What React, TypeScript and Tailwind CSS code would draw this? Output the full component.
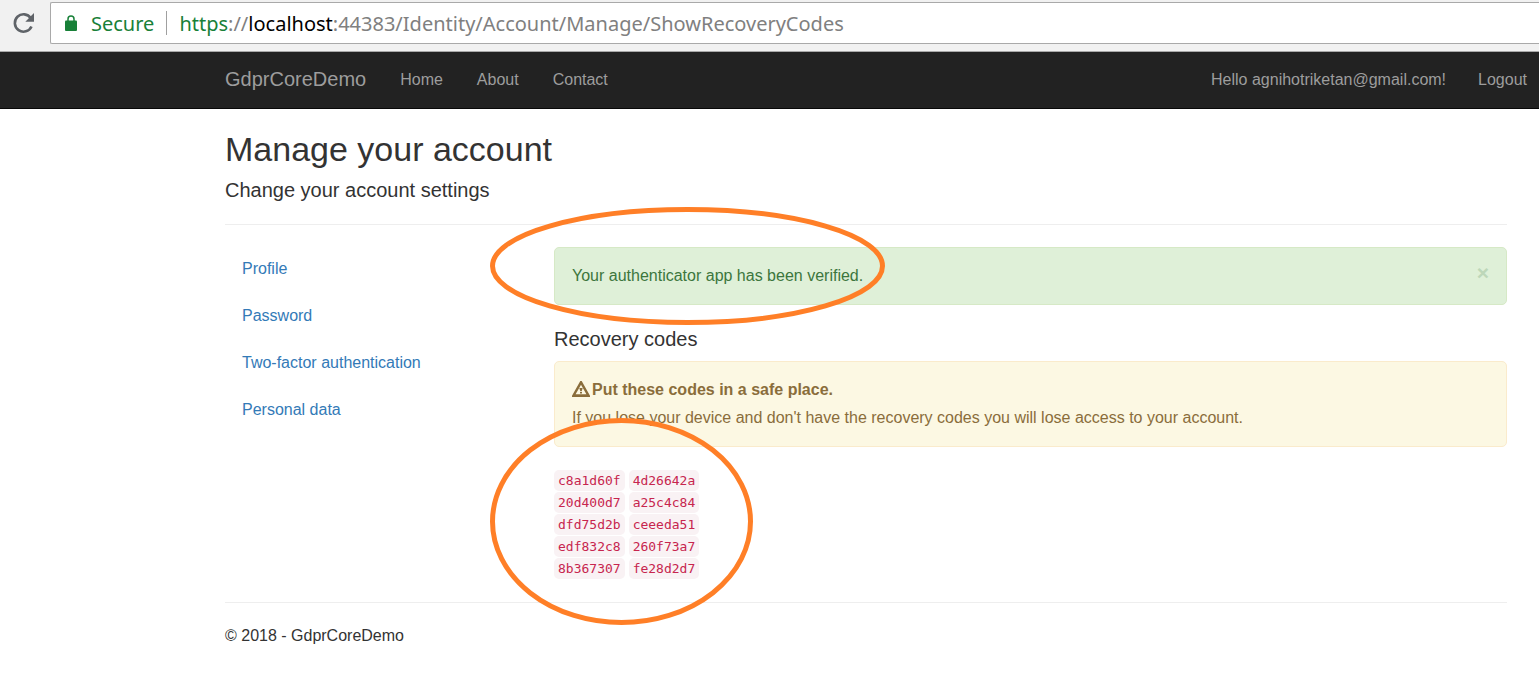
const navLinks = ["Home", "About", "Contact"];
const sideLinks = ["Profile", "Password", "Two-factor authentication", "Personal data"];
const codes = [
  ["c8a1d60f", "4d26642a"],
  ["20d400d7", "a25c4c84"],
  ["dfd75d2b", "ceeeda51"],
  ["edf832c8", "260f73a7"],
  ["8b367307", "fe28d2d7"],
];

function ReloadIcon() {
  return (
    <svg className="size-6" viewBox="0 0 24 24" aria-hidden="true">
      <path d="M18.800 7.200A8.700 8.700 0 1 0 19.500 15.500" fill="none" stroke="#5f6368" strokeWidth="2.600" />
      <path d="M22 2v8.700h-8.700Z" fill="#5f6368" />
    </svg>
  );
}

function LockIcon() {
  return (
    <svg className="h-4 w-3" viewBox="0 0 12 16" aria-hidden="true">
      <path d="M3 7V4a3 3 0 0 1 6 0V7" fill="none" stroke="#188038" strokeWidth="1.500" />
      <rect y="5.500" width="12" height="10.500" rx="1" fill="#188038" />
    </svg>
  );
}

function WarningIcon() {
  return (
    <svg className="h-4 w-[18px] shrink-0" viewBox="0 0 18 16" aria-hidden="true">
      <path
        d="M8.300 0h1.400L18 14.700V16H0v-1.300ZM9 3.800 3.600 13.300h10.800Z"
        fill="#8a6d3b"
        fillRule="evenodd"
      />
      <path d="M7.300 7h3.400L9.700 10.200H8.300ZM8 11h2v1.500H8Z" fill="#8a6d3b" />
    </svg>
  );
}

function BrowserBar() {
  return (
    <div className="flex h-[52px] items-start border-b border-[#a9a9a9] bg-[#f1f1f1] pt-0.5 font-['Noto_Sans',sans-serif] text-[20px]">
      <button type="button" aria-label="Reload" className="flex h-[42px] w-[50px] shrink-0 items-center pl-3">
        <ReloadIcon />
      </button>
      <div className="flex h-[42px] flex-1 items-center overflow-hidden rounded-l-xs border border-r-0 border-[#a9a9a9] bg-white pl-3.5 whitespace-nowrap">
        <LockIcon />
        <span className="ml-3.5 text-[#188038]">Secure</span>
        <span className="mx-3 h-6 w-px shrink-0 bg-[#a0a0a0]" />
        <span className="text-[#808080]">
          <span className="text-[#188038]">https</span>://<span className="text-black">localhost</span>
          :44383/Identity/Account/Manage/ShowRecoveryCodes
        </span>
      </div>
    </div>
  );
}

export default function App() {
  return (
    <div className="bg-white font-['Liberation_Sans',Arial,sans-serif] text-[16px] leading-[23px] text-[#333]">
      <BrowserBar />
      <header className="flex h-[57px] items-center border-b border-[#080808] bg-[#222] pr-3 pb-0.5 pl-[225px] text-[#9d9d9d]">
        <a href="#" className="text-[20px]">GdprCoreDemo</a>
        <nav className="ml-[34px] flex flex-1 gap-[34px]">
          {navLinks.map((label) => (
            <a key={label} href="#">{label}</a>
          ))}
        </nav>
        <div className="flex gap-8">
          <a href="#">Hello agnihotriketan@gmail.com!</a>
          <button type="button">Logout</button>
        </div>
      </header>

      <main className="pr-8 pl-[225px]">
        <h1 className="pt-5 text-[34px] leading-[40px]">Manage your account</h1>
        <h2 className="mt-2.5 text-[20px] leading-[22px]">Change your account settings</h2>
        <hr className="mt-[23px] border-[#eee]" />

        <div className="mt-[22px] flex">
          <nav className="flex w-[329px] shrink-0 flex-col gap-0.5">
            {sideLinks.map((label) => (
              <a key={label} href="#" className="px-[17px] pt-2.5 pb-3 text-[#337ab7]">{label}</a>
            ))}
          </nav>

          <section className="relative min-w-0 flex-1">
            <div role="alert" className="flex items-start justify-between rounded-[5px] border border-[#d6e9c6] bg-[#dff0d8] px-[17px] py-4 leading-6 text-[#3c763d]">
              <span>Your authenticator app has been verified.</span>
              <button type="button" aria-label="Close" className="text-[21px] leading-[18px] font-bold text-[#bdd7b9]">×</button>
            </div>
            <h3 className="mt-[23px] text-[20px] leading-[22px]">Recovery codes</h3>
            <div role="alert" className="mt-[11px] rounded-[5px] border border-[#faebcc] bg-[#fcf8e3] px-[17px] py-3.5 leading-7 text-[#8a6d3b]">
              <p className="flex items-start gap-0.5">
                <span className="pt-[5px]"><WarningIcon /></span>
                <strong>Put these codes in a safe place.</strong>
              </p>
              <p>If you lose your device and don't have the recovery codes you will lose access to your account.</p>
            </div>
            <ul className="mt-[23px] flex flex-col gap-px font-['DejaVu_Sans_Mono',monospace] text-[13px] leading-[21px] text-[#c7254e]">
              {codes.map(([a, b]) => (
                <li key={a} className="flex gap-1">
                  <code className="rounded-[5px] bg-[#f9f2f4] px-1 font-[inherit]">{a}</code>
                  <code className="rounded-[5px] bg-[#f9f2f4] px-1 font-[inherit]">{b}</code>
                </li>
              ))}
            </ul>

            <svg className="pointer-events-none absolute -top-10 -left-16 h-[119px] w-[395px]" viewBox="0 0 395 119" aria-hidden="true">
              <ellipse cx="197.500" cy="59" rx="195" ry="56.500" fill="none" stroke="#ff7f27" strokeWidth="5" />
            </svg>
            <svg className="pointer-events-none absolute top-[171px] -left-16 h-[207px] w-[263px]" viewBox="0 0 263 207" aria-hidden="true">
              <ellipse cx="131.500" cy="103.500" rx="129" ry="101" fill="none" stroke="#ff7f27" strokeWidth="5" />
            </svg>
          </section>
        </div>

        <hr className="mt-[23px] border-[#eee]" />
        <footer className="pt-[21px] pb-8">© 2018 - GdprCoreDemo</footer>
      </main>
    </div>
  );
}
